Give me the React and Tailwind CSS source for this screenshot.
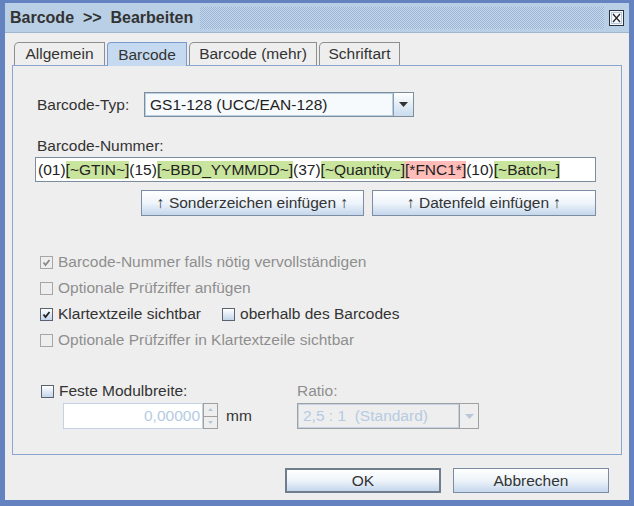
import React from "react";

function CheckMark({ color }) {
  return (
    <svg width="9" height="9" viewBox="0 0 9 9" className="block">
      <path d="M1.5 4.5 L3.5 7 L7.5 2" fill="none" stroke={color} strokeWidth="1.8" />
    </svg>
  );
}

function Checkbox({ checked, disabled, label, className = "" }) {
  const box = disabled
    ? "border-[#a6a6a6] bg-[#eeeeee]"
    : "border-[#5a6470] bg-linear-to-b from-[#ffffff] to-[#c3d5ea]";
  return (
    <div className={"flex items-center " + className}>
      <div className={"w-[13px] h-[13px] border flex items-center justify-center " + box}>
        {checked && <CheckMark color={disabled ? "#8a8a8a" : "#222"} />}
      </div>
      <span className={"ml-[5px] " + (disabled ? "text-[#8e8e8e]" : "text-[#333]")}>{label}</span>
    </div>
  );
}

function Tab({ label, selected, width }) {
  if (selected) {
    return (
      <div
        className={
          "relative z-10 h-[24px] -mb-px border border-b-0 border-[#7a9bd0] bg-[#c5daf0] rounded-tl-[4px] flex items-center justify-center " +
          width
        }
      >
        {label}
      </div>
    );
  }
  return (
    <div
      className={
        "h-[23px] border border-b-0 border-[#8e8e8e] bg-[#eeeeee] rounded-tl-[5px] flex items-center justify-center " +
        width
      }
    >
      {label}
    </div>
  );
}

function DownArrow({ color }) {
  return (
    <svg width="9" height="5" viewBox="0 0 9 5" className="block">
      <path d="M0 0 L9 0 L4.5 5 Z" fill={color} />
    </svg>
  );
}

export default function App() {
  return (
    <div className="w-[634px] h-[506px] bg-[#6382bf] pt-[3px] pl-[5px] pr-[5px] pb-[6px] font-['Liberation_Sans',Arial,sans-serif] text-[15.5px] leading-[18px] text-[#333]">
      <div className="h-full flex flex-col bg-[#eeeeee]">
        {/* Title bar */}
        <div className="h-[30px] bg-[#b8cfe5] border-b border-[#9fb4cd] flex items-center pl-[5px] pr-[5px]">
          <span className="font-bold text-[16px] whitespace-pre text-[#333]">Barcode  &gt;&gt;  Bearbeiten</span>
          <div className="flex-1 h-[22px] ml-[7px] mr-[5px] bg-[repeating-conic-gradient(#9bb4d3_0_25%,#c7d9ec_0_50%)] bg-[length:2px_2px]" />
          <div className="w-[15px] h-[16px] border border-[#2a3344] bg-[#f4f7fb] flex items-center justify-center">
            <svg width="11" height="12" viewBox="0 0 11 12" className="block">
              <rect x="0.5" y="0.5" width="10" height="11" fill="none" stroke="#b8c8dc" />
              <path d="M2 2 L9 10 M9 2 L2 10" stroke="#222" strokeWidth="1.2" />
            </svg>
          </div>
        </div>

        {/* Tabs */}
        <div className="mt-[9px] pl-[9px] flex items-end gap-[2px] h-[23px]">
          <Tab label="Allgemein" width="w-[91px]" />
          <Tab label="Barcode" selected width="w-[80px]" />
          <Tab label="Barcode (mehr)" width="w-[128px]" />
          <Tab label="Schriftart" width="w-[81px]" />
        </div>

        {/* Panel */}
        <div className="mx-[7px] h-[390px] border border-[#8aa5d0] flex flex-col">
          {/* Barcode-Typ row */}
          <div className="mt-[26px] flex items-center h-[25px]">
            <span className="ml-[24px] w-[107px]">Barcode-Typ:</span>
            <div className="w-[270px] h-[25px] border border-[#7e8d9c] flex">
              <div className="flex-1 border border-[#b8cfe5] bg-[#f7fafd] flex items-center pl-[4px] text-[#222]">
                GS1-128 (UCC/EAN-128)
              </div>
              <div className="w-[20px] border-l border-[#8e9bab] bg-linear-to-b from-[#ffffff] to-[#c9dbee] flex items-center justify-center">
                <DownArrow color="#333" />
              </div>
            </div>
          </div>

          {/* Barcode-Nummer */}
          <div className="mt-[20px] ml-[24px]">Barcode-Nummer:</div>
          <div className="mt-[2px] ml-[22px] w-[561px] h-[25px] border border-[#7e8d9c] bg-white flex items-center pl-[2px] text-[#222] whitespace-pre">
            <span>(01)</span>
            <span className="bg-[#c9e59d]">[~GTIN~]</span>
            <span>(15)</span>
            <span className="bg-[#c9e59d]">[~BBD_YYMMDD~]</span>
            <span>(37)</span>
            <span className="bg-[#c9e59d]">[~Quantity~]</span>
            <span className="bg-[#ffbcb8]">[*FNC1*]</span>
            <span>(10)</span>
            <span className="bg-[#c9e59d]">[~Batch~]</span>
          </div>

          {/* Insert buttons */}
          <div className="mt-[8px] ml-[128px] flex gap-[8px]">
            <div className="w-[223px] h-[26px] border border-[#7b8ca3] bg-linear-to-b from-[#ffffff] via-[#eef4fa] to-[#c4d7ec] flex items-center justify-center">
              ↑ Sonderzeichen einfügen ↑
            </div>
            <div className="w-[224px] h-[26px] border border-[#7b8ca3] bg-linear-to-b from-[#ffffff] via-[#eef4fa] to-[#c4d7ec] flex items-center justify-center">
              ↑ Datenfeld einfügen ↑
            </div>
          </div>

          {/* Checkboxes */}
          <div className="mt-[33px] ml-[27px] flex flex-col">
            <Checkbox className="h-[26px]" checked disabled label="Barcode-Nummer falls nötig vervollständigen" />
            <Checkbox className="h-[26px]" disabled label="Optionale Prüfziffer anfügen" />
            <div className="h-[26px] flex items-center">
              <Checkbox checked label="Klartextzeile sichtbar" />
              <Checkbox className="ml-[21px]" label="oberhalb des Barcodes" />
            </div>
            <Checkbox className="h-[26px]" disabled label="Optionale Prüfziffer in Klartextzeile sichtbar" />
          </div>

          {/* Modulbreite / Ratio */}
          <div className="mt-[28px] flex">
            <div className="ml-[28px] w-[256px] flex flex-col">
              <Checkbox className="h-[20px]" label="Feste Modulbreite:" />
              <div className="mt-[2px] ml-[22px] flex items-center">
                <div className="w-[140px] h-[26px] border border-[#c3d3e6] bg-white flex items-center justify-end pr-[2px] text-[#b5cbe2]">
                  0,00000
                </div>
                <div className="w-[15px] h-[26px] border border-[#a0a0a0] flex flex-col">
                  <div className="flex-1 border-b border-[#a0a0a0] flex items-center justify-center">
                    <svg width="5" height="3" viewBox="0 0 5 3" className="block"><path d="M0 3 L5 3 L2.5 0 Z" fill="#b8c8da" /></svg>
                  </div>
                  <div className="flex-1 flex items-center justify-center">
                    <svg width="5" height="3" viewBox="0 0 5 3" className="block"><path d="M0 0 L5 0 L2.5 3 Z" fill="#b8c8da" /></svg>
                  </div>
                </div>
                <span className="ml-[8px] text-[#333]">mm</span>
              </div>
            </div>
            <div className="flex flex-col">
              <div className="h-[20px] flex items-center text-[#8e8e8e]">Ratio:</div>
              <div className="mt-[2px] w-[182px] h-[26px] border border-[#a0a0a0] flex">
                <div className="flex-1 border border-[#c3d3e6] flex items-center pl-[4px] text-[#b5cbe2]">
                  2,5 : 1&nbsp;&nbsp;(Standard)
                </div>
                <div className="w-[19px] border-l border-[#a0a0a0] flex items-center justify-center">
                  <DownArrow color="#b8c8da" />
                </div>
              </div>
            </div>
          </div>
        </div>

        {/* Bottom buttons */}
        <div className="mt-[13px] flex justify-end gap-[12px] pr-[20px]">
          <div className="w-[156px] h-[25px] border-2 border-[#6f7d8c] bg-linear-to-b from-[#ffffff] via-[#eef4fa] to-[#c4d7ec] flex items-center justify-center">
            OK
          </div>
          <div className="w-[156px] h-[25px] border border-[#7b8ca3] bg-linear-to-b from-[#ffffff] via-[#eef4fa] to-[#c4d7ec] flex items-center justify-center">
            Abbrechen
          </div>
        </div>
      </div>
    </div>
  );
}
